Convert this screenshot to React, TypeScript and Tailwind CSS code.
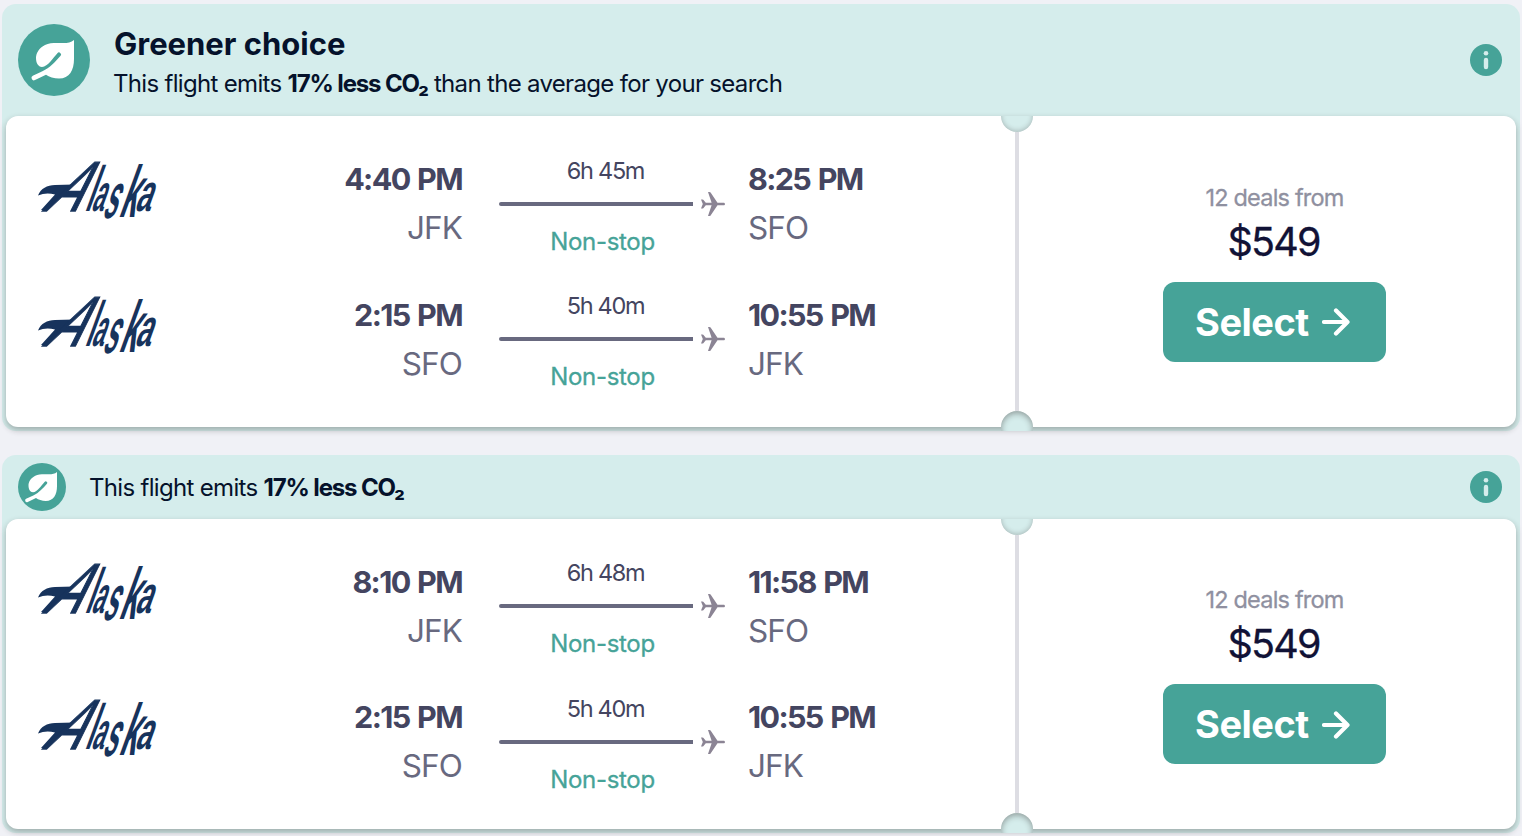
import type { ReactNode } from "react";

type Leg = { depart: string; from: string; duration: string; arrive: string; to: string };

const outbound: Leg = { depart: "4:40 PM", from: "JFK", duration: "6h 45m", arrive: "8:25 PM", to: "SFO" };
const outboundLate: Leg = { depart: "8:10 PM", from: "JFK", duration: "6h 48m", arrive: "11:58 PM", to: "SFO" };
const inbound: Leg = { depart: "2:15 PM", from: "SFO", duration: "5h 40m", arrive: "10:55 PM", to: "JFK" };

function LeafBadge({ large }: { large?: boolean }) {
  return (
    <div className={`flex shrink-0 items-center justify-center rounded-full bg-[#46a398] ${large ? "size-[72px]" : "size-12"}`}>
      <svg viewBox="0 0 24 24" className={large ? "size-12" : "size-9"} fill="white">
        <path d="M22 2C20.5 3.3 19 3.5 16.5 3.5C12.5 3.5 9.8 3.3 7.5 4.5C4.6 6 3 8.5 3 11C3 13.4 4 15.4 6 15.5C9 15.2 11.5 11 13.7 8.6A1 1 0 0 1 15.3 9.9C12.5 13 10 16 6.2 17.6L1.4 19.9A1.1 1.1 0 0 0 2.5 22L8 19.4C9.5 20.6 12 21.3 14.5 21.3C19.8 21.3 22 17 22 11.5Z" />
      </svg>
    </div>
  );
}

function InfoIcon() {
  return (
    <svg viewBox="0 0 32 32" className="size-8 shrink-0">
      <circle cx="16" cy="16" r="16" fill="#46a398" />
      <circle cx="16" cy="9.2" r="2.3" fill="#d5edec" />
      <rect x="13.8" y="13.8" width="4.4" height="11.4" rx="2.2" fill="#d5edec" />
    </svg>
  );
}

function AlaskaLogo() {
  return (
    <svg viewBox="0 0 120 60" className="mt-1.5 h-[60px] w-[120px] shrink-0 overflow-visible" fill="#17335c" fontFamily="'Liberation Sans', sans-serif" fontWeight="700">
      <path d="M0 35.5C3 28 9 25.5 17 25L36 24.5L31 30L24 33.5L12 47.5Q9 51 3 50L17 34.5Q8 32 0 35.5Z" />
      <text transform="translate(4 50.5) skewX(-38) scale(0.71 1)" fontSize="71" fontWeight="400" stroke="#17335c" strokeWidth="1.4">A</text>
      <text transform="translate(46 50.5) skewX(-20) scale(0.4 1)" fontSize="64">l</text>
      <text transform="translate(52.5 50.5) skewX(-20) scale(0.42 1)" fontSize="52">a</text>
      <text transform="translate(63.5 58) skewX(-20) scale(0.37 1)" fontSize="64">s</text>
      <text transform="translate(79.5 57) skewX(-20) scale(0.41 1)" fontSize="73">k</text>
      <text transform="translate(96 51) skewX(-20) scale(0.53 1)" fontSize="53">a</text>
    </svg>
  );
}

function Plane() {
  return (
    <svg viewBox="0 0 24 24" className="size-6 shrink-0" fill="#8b8494">
      <path d="M24 12C24 11.3 23.4 10.7 22.5 10.7H16.5L9.6.6Q9.2 0 8.5 0H7L10.6 10.7H4.8L2.3 7.8Q2 7.4 1.4 7.4H0L1.8 12L0 16.6H1.4Q2 16.6 2.3 16.2L4.8 13.3H10.6L7 24H8.5Q9.2 24 9.6 23.4L16.5 13.3H22.5C23.4 13.3 24 12.7 24 12Z" />
    </svg>
  );
}

function FlightLeg({ leg }: { leg: Leg }) {
  return (
    <div className="flex h-[135.5px] items-start">
      <AlaskaLogo />
      <div className="ml-[104px] flex w-[200px] flex-col items-end pt-[0.4px] leading-[49px]">
        <span className="text-[30.5px] font-bold tracking-[-1.65px] text-[#444560] [word-spacing:2px]">{leg.depart}</span>
        <span className="text-[31.5px] tracking-[-0.9px] text-[#68697f]">{leg.from}</span>
      </div>
      <div className="ml-[37px] flex w-[226px] flex-col">
        <span className="pr-[13px] text-center text-[23.5px] leading-[34px] tracking-[-1.3px] text-[#444560]">{leg.duration}</span>
        <div className="flex h-8 items-center gap-2">
          <div className="h-1 flex-1 rounded-l-sm bg-[#68697f]" />
          <Plane />
        </div>
        <span className="pr-[19px] text-center text-2xl leading-[43px] tracking-[-0.3px] text-[#46a398] [-webkit-text-stroke:0.3px_#46a398]">Non-stop</span>
      </div>
      <div className="ml-[23px] flex flex-col pt-[0.4px] leading-[49px]">
        <span className="text-[30.5px] font-bold tracking-[-1.65px] text-[#444560] [word-spacing:2px]">{leg.arrive}</span>
        <span className="text-[31.5px] tracking-[-0.9px] text-[#68697f]">{leg.to}</span>
      </div>
    </div>
  );
}

function Ticket({ legs }: { legs: Leg[] }) {
  return (
    <div className="flex h-[310.5px] rounded-xl bg-white shadow-[0_3px_6px_rgba(37,32,31,0.32)]">
      <div className="w-[995px] pt-[37.7px] pl-8">
        {legs.map((leg) => (
          <FlightLeg key={leg.depart} leg={leg} />
        ))}
      </div>
      <div className="-mb-1 flex w-8 flex-col items-center">
        <div className="flex h-4 w-8 items-end overflow-hidden">
          <div className="size-8 shrink-0 rounded-full bg-[#d5edec] shadow-[inset_0_-1px_5px_rgba(37,32,31,0.25)]" />
        </div>
        <div className="w-1 flex-1 bg-[#dddde3]" />
        <div className="flex h-5 w-8 items-start overflow-hidden">
          <div className="size-8 shrink-0 rounded-full bg-[#d5edec] shadow-[inset_0_2px_6px_rgba(37,32,31,0.4)]" />
        </div>
      </div>
      <div className="flex flex-1 flex-col items-center pt-[63.8px]">
        <span className="text-[23.5px] leading-9 tracking-[-0.8px] text-[#8f90a0] [-webkit-text-stroke:0.3px_#8f90a0]">12 deals from</span>
        <span className="pr-0.5 text-[39.5px] leading-[53px] tracking-[-1.8px] text-[#111236] [-webkit-text-stroke:0.3px_#111236]">$549</span>
        <button className="mt-[13px] flex h-20 w-[223px] items-center gap-[13px] rounded-xl bg-[#46a398] pt-px pl-8 text-[38px] font-bold tracking-[-0.5px] text-white">
          Select
          <svg viewBox="0 0 28 28" className="size-7" fill="none" stroke="white" strokeWidth="4.2" strokeLinecap="round" strokeLinejoin="round">
            <path d="M2 14H25M14 2.5L25.5 14L14 25.5" />
          </svg>
        </button>
      </div>
    </div>
  );
}

function Offer({ header, legs, tall }: { header: ReactNode; legs: Leg[]; tall?: boolean }) {
  return (
    <section className="rounded-[14px] bg-[#d5edec] px-1 pb-1">
      <header className={`flex items-center gap-6 px-3 text-[#05122b] ${tall ? "h-28" : "h-16"}`}>
        <LeafBadge large={tall} />
        <div className="flex-1">{header}</div>
        <div className="pr-0.5">
          <InfoIcon />
        </div>
      </header>
      <Ticket legs={legs} />
    </section>
  );
}

export default function App() {
  return (
    <main className="flex h-[836px] w-[1522px] flex-col gap-6 overflow-hidden bg-[#f0f1f6] px-0.5 pt-1 font-['Inter','Liberation_Sans',sans-serif] whitespace-nowrap">
      <Offer
        tall
        legs={[outbound, inbound]}
        header={
          <div className="pt-[7.5px]">
            <h2 className="text-[31px] leading-10 font-bold">Greener choice</h2>
            <p className="-ml-px text-2xl leading-10 tracking-[-0.68px]">
              This flight emits <b className="font-bold tracking-[-1.15px]">17% less CO₂</b> than the average for your search
            </p>
          </div>
        }
      />
      <Offer
        legs={[outboundLate, inbound]}
        header={
          <p className="-ml-px pt-0.5 text-2xl leading-10 tracking-[-0.68px]">
            This flight emits <b className="font-bold tracking-[-1.15px]">17% less CO₂</b>
          </p>
        }
      />
    </main>
  );
}
